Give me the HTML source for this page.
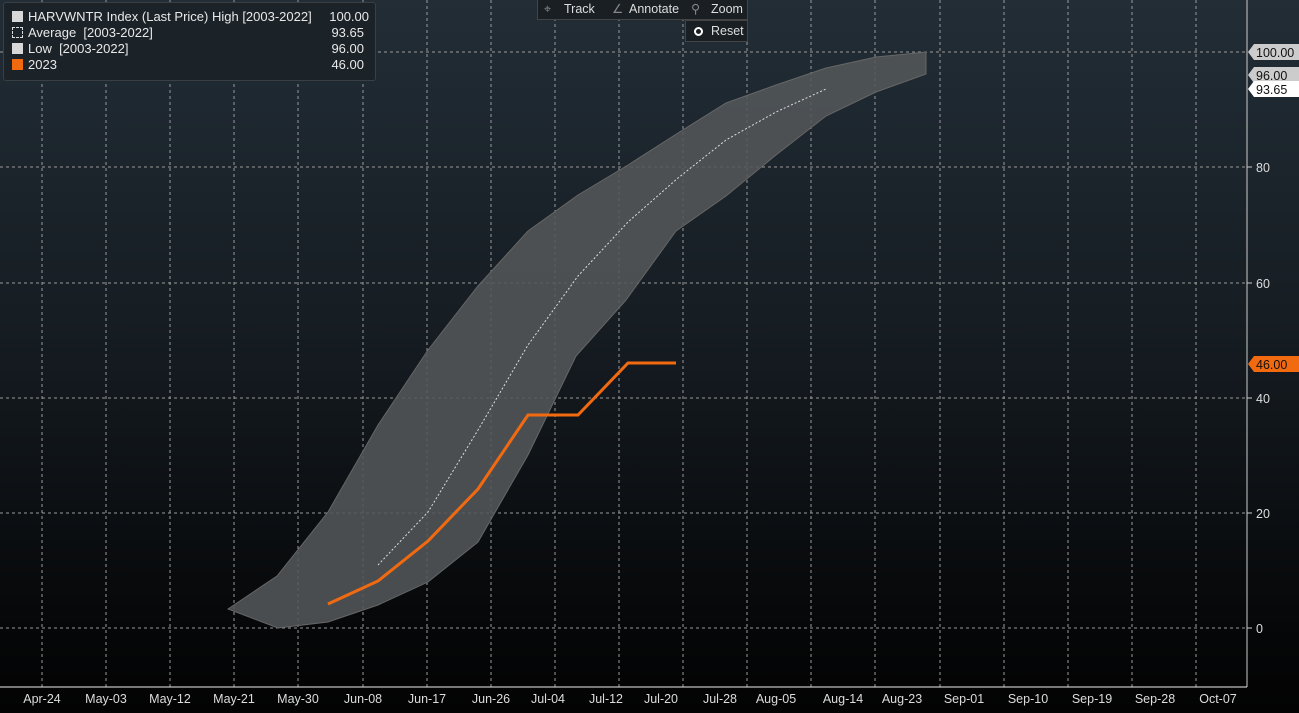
<!DOCTYPE html>
<html><head><meta charset="utf-8"><style>
body{margin:0;width:1299px;height:713px;overflow:hidden;background:linear-gradient(#222d36 0%,#161d23 45%,#050607 90%,#030303 100%);font-family:"Liberation Sans",sans-serif;}
svg{position:absolute;left:0;top:0}
.leg{position:absolute;left:3px;top:2px;width:371px;height:77px;background:#1b2228;border:1px solid #3a3f44;border-radius:3px;color:#e8e8e8;font-size:13px}
.leg div{position:absolute;left:8px;height:16px;line-height:16px}
.leg .v{position:absolute;right:12px;text-align:right}
.sw{display:inline-block;width:11px;height:11px;vertical-align:-1px;margin-right:5px}
.tb{position:absolute;background:#1a1f24;border:1px solid #444;color:#ddd;font-size:12.5px}
</style></head><body>
<svg width="1299" height="713">
<g stroke="#9a9a9a" stroke-width="1" stroke-dasharray="3,3">
<line x1="42" y1="0" x2="42" y2="687"/><line x1="106" y1="0" x2="106" y2="687"/><line x1="170" y1="0" x2="170" y2="687"/><line x1="234" y1="0" x2="234" y2="687"/><line x1="298" y1="0" x2="298" y2="687"/><line x1="363" y1="0" x2="363" y2="687"/><line x1="427" y1="0" x2="427" y2="687"/><line x1="491" y1="0" x2="491" y2="687"/><line x1="555" y1="0" x2="555" y2="687"/><line x1="619" y1="0" x2="619" y2="687"/><line x1="683" y1="0" x2="683" y2="687"/><line x1="747" y1="0" x2="747" y2="687"/><line x1="811" y1="0" x2="811" y2="687"/><line x1="875" y1="0" x2="875" y2="687"/><line x1="940" y1="0" x2="940" y2="687"/><line x1="1004" y1="0" x2="1004" y2="687"/><line x1="1068" y1="0" x2="1068" y2="687"/><line x1="1132" y1="0" x2="1132" y2="687"/><line x1="1196" y1="0" x2="1196" y2="687"/>
<line x1="0" y1="52" x2="1247" y2="52"/><line x1="0" y1="167" x2="1247" y2="167"/><line x1="0" y1="283" x2="1247" y2="283"/><line x1="0" y1="398" x2="1247" y2="398"/><line x1="0" y1="513" x2="1247" y2="513"/><line x1="0" y1="628" x2="1247" y2="628"/>
</g>
<polygon fill="#535659" fill-opacity="0.88" stroke="#666" stroke-width="1" points="228,609 277,576 328,512 378,425 428,350 478,286 528,231 578,195 628,165 678,133 726,103 776,85 826,68 876,57 926,52 926,74 876,92 826,116 776,155 726,196 676,231 626,300 576,356 528,455 478,542 428,582 378,605 328,622 278,628"/>
<polyline fill="none" stroke="#ddd" stroke-width="1" stroke-dasharray="2,2" points="378,565 428,512 478,430 528,345 578,276 628,222 678,178 726,140 776,112 826,89"/>
<polyline fill="none" stroke="#f26a10" stroke-width="3" points="328,604 378,581 428,541 478,489 528,415 578,415 628,363 676,363"/>
<line x1="1247" y1="0" x2="1247" y2="687" stroke="#ccc"/>
<line x1="0" y1="687" x2="1247" y2="687" stroke="#eee"/>
<g stroke="#ccc"><line x1="1247" y1="167" x2="1252" y2="167"/><line x1="1247" y1="283" x2="1252" y2="283"/><line x1="1247" y1="398" x2="1252" y2="398"/><line x1="1247" y1="513" x2="1252" y2="513"/><line x1="1247" y1="628" x2="1252" y2="628"/></g>
<g fill="#ddd" font-size="12.5" font-family="Liberation Sans"><text x="1256" y="172">80</text><text x="1256" y="288">60</text><text x="1256" y="403">40</text><text x="1256" y="518">20</text><text x="1256" y="633">0</text></g>
<g fill="#ddd" font-size="12.5" font-family="Liberation Sans" text-anchor="middle">
<text x="42" y="703">Apr-24</text><text x="106" y="703">May-03</text><text x="170" y="703">May-12</text><text x="234" y="703">May-21</text><text x="298" y="703">May-30</text><text x="363" y="703">Jun-08</text><text x="427" y="703">Jun-17</text><text x="491" y="703">Jun-26</text><text x="548" y="703">Jul-04</text><text x="606" y="703">Jul-12</text><text x="661" y="703">Jul-20</text><text x="720" y="703">Jul-28</text><text x="776" y="703">Aug-05</text><text x="843" y="703">Aug-14</text><text x="902" y="703">Aug-23</text><text x="964" y="703">Sep-01</text><text x="1028" y="703">Sep-10</text><text x="1092" y="703">Sep-19</text><text x="1155" y="703">Sep-28</text><text x="1218" y="703">Oct-07</text></g>
<polygon fill="#ccc" points="1248,52 1254,44 1299,44 1299,60 1254,60"/>
<text x="1256" y="57" font-size="12.5" fill="#111" font-family="Liberation Sans">100.00</text>
<polygon fill="#ccc" points="1248,75 1254,67 1299,67 1299,83 1254,83"/>
<text x="1256" y="80" font-size="12.5" fill="#111" font-family="Liberation Sans">96.00</text>
<polygon fill="#fff" points="1248,89 1254,81 1299,81 1299,97 1254,97"/>
<text x="1256" y="94" font-size="12.5" fill="#111" font-family="Liberation Sans">93.65</text>
<polygon fill="#f26a10" points="1248,364 1254,356 1299,356 1299,372 1254,372"/>
<text x="1256" y="369" font-size="12.5" fill="#111" font-family="Liberation Sans">46.00</text>
</svg>
<div class="leg">
<div style="top:6px;width:357px"><span class="sw" style="background:#d8d8d8"></span>HARVWNTR Index (Last Price) High [2003-2022]<span class="v" style="right:0">100.00</span></div>
<div style="top:22px;width:352px"><span class="sw" style="border:1px dashed #ddd;width:9px;height:9px"></span>Average &nbsp;[2003-2022]<span class="v" style="right:0">93.65</span></div>
<div style="top:38px;width:352px"><span class="sw" style="background:#d8d8d8"></span>Low &nbsp;[2003-2022]<span class="v" style="right:0">96.00</span></div>
<div style="top:54px;width:352px"><span class="sw" style="background:#f26a10"></span>2023<span class="v" style="right:0">46.00</span></div>
</div>
<div class="tb" style="left:537px;top:-1px;width:209px;height:19px;line-height:18px">
<span style="position:absolute;left:6px;color:#888">⌖</span><span style="position:absolute;left:26px">Track</span>
<span style="position:absolute;left:74px;color:#888">∠</span><span style="position:absolute;left:91px">Annotate</span>
<span style="position:absolute;left:153px;color:#888">⚲</span><span style="position:absolute;left:173px">Zoom</span></div>
<div class="tb" style="left:685px;top:20px;width:61px;height:20px;line-height:20px"><span style="position:absolute;left:8px;top:6px;width:5px;height:5px;border:2.5px solid #fff;border-radius:50%"></span><span style="position:absolute;left:25px">Reset</span></div>
</body></html>
